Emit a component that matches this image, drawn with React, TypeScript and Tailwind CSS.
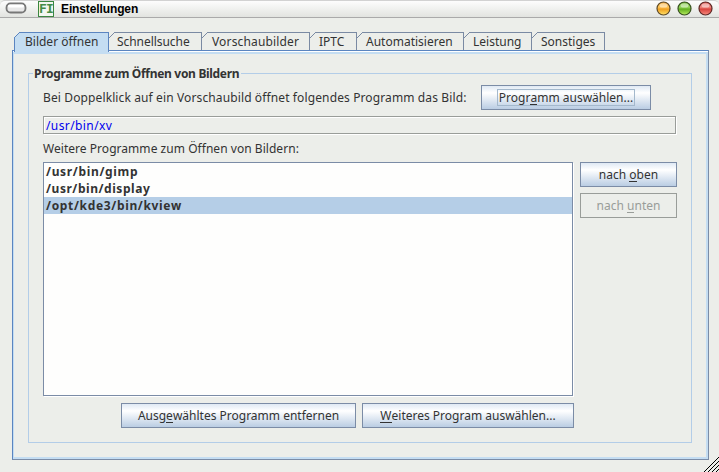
import React from "react";

const tabs = [
  { label: "Schnellsuche", width: "w-[93px]", spacing: "tracking-[-0.05px]", pad: "pl-[8px]" },
  { label: "Vorschaubilder", width: "w-[108px]", spacing: "tracking-[0.15px]", pad: "pl-[10px]" },
  { label: "IPTC", width: "w-[47px]", spacing: "tracking-[0px]", pad: "pl-[9px]" },
  { label: "Automatisieren", width: "w-[107px]", spacing: "tracking-[0px]", pad: "pl-[9px]" },
  { label: "Leistung", width: "w-[68px]", spacing: "tracking-[0px]", pad: "pl-[9px]" },
  { label: "Sonstiges", width: "w-[73px]", spacing: "tracking-[0px]", pad: "pl-[9px]" },
];

function Tab({ label, width, spacing, pad }: { label: string; width: string; spacing: string; pad: string }) {
  return (
    <div className={`relative h-[18px] shrink-0 border-t border-r border-[#7a8aa3] leading-[18px] ${pad} ${width} ${spacing}`}>
      <svg className="absolute -top-px left-0" width="7" height="7" shapeRendering="crispEdges">
        <path d="M0 0h5v1h-1v1h-1v1h-1v1h-1v1h-1z" fill="#eceeea" />
        <path d="M0 5h1v-1h1v-1h1v-1h1v-1h1v-1h1v1h-1v1h-1v1h-1v1h-1v1h-1v1h-1z" fill="#7a8aa3" />
      </svg>
      {label}
    </div>
  );
}

function Button({ className, children }: { className: string; children: React.ReactNode }) {
  return (
    <button
      className={`flex h-[25px] shrink-0 items-center justify-center border border-[#7b8ca6] bg-linear-to-b from-[#dfe9f4] via-[#ffffff] via-30% to-[#bacde3] leading-[17px] ${className}`}
    >
      {children}
    </button>
  );
}

function Key({ children }: { children: string }) {
  return <span className="inline-block h-[14px] border-b border-current leading-[14px]">{children}</span>;
}

function Light({ id, light, mid, dark, rim }: { id: string; light: string; mid: string; dark: string; rim: string }) {
  return (
    <svg width="15" height="15" viewBox="0 0 15 15">
      <defs>
        <linearGradient id={id} x1="0" y1="0" x2="0" y2="1">
          <stop offset="0" stopColor={dark} />
          <stop offset="0.4" stopColor={mid} />
          <stop offset="0.55" stopColor={dark} />
          <stop offset="1" stopColor={light} />
        </linearGradient>
      </defs>
      <circle cx="7.5" cy="7.5" r="6.5" fill={`url(#${id})`} stroke={rim} strokeWidth="1.2" />
      <ellipse cx="7.5" cy="4.4" rx="4" ry="2.2" fill="#fff" opacity="0.5" />
    </svg>
  );
}

export default function App() {
  return (
    <div className="relative h-[472px] w-[719px] overflow-hidden bg-[#eceeea] font-['Noto_Sans','Open_Sans',sans-serif] text-[12px] text-[#333]">
      <header className="flex h-[18px] items-start rounded-t-[5px] border-t border-b border-t-[#d2d2d2] border-b-[#aaa] bg-linear-to-b from-[#fdfdfd] to-[#e2e4e0]">
        <svg className="mt-px ml-[5px]" width="22" height="12">
          <rect x="1.5" y="1.5" width="19" height="9" rx="4" fill="#e8e8e8" stroke="#777" strokeWidth="1.8" />
          <rect x="3" y="2.5" width="16" height="3" rx="1.5" fill="#fff" />
        </svg>
        <div className="ml-[11px] h-4 w-4 border border-[#3c8741] bg-[#f3f7f0] text-center font-['DejaVu_Sans_Mono',monospace] text-[13px] leading-[13px] font-bold tracking-[-0.8px] text-[#438c47]">
          FI
        </div>
        <div className="ml-[7px] font-['Liberation_Sans',Arial,sans-serif] text-[12px] leading-[16px] font-bold tracking-[-0.12px] text-black">
          Einstellungen
        </div>
        <div className="mr-[6px] ml-auto flex gap-[6px]">
          <Light id="orange" light="#ffe36b" mid="#ffc557" dark="#f0a020" rim="#5e4a28" />
          <Light id="green" light="#b8ed62" mid="#95d65c" dark="#62b020" rim="#37501f" />
          <Light id="red" light="#f88d80" mid="#ee8780" dark="#d8443f" rim="#5e2826" />
        </div>
      </header>

      <nav className="mt-[14px] ml-[14px] flex h-[18px]">
        <div className="relative z-10 h-[20px] w-[95px] shrink-0 border-t border-r border-l border-[#5b85c0] bg-[#c4ddf2] pl-[10px] leading-[18px] tracking-[0px]">
          <svg className="absolute -top-px -left-px" width="7" height="7" shapeRendering="crispEdges">
            <path d="M0 0h6v1h-1v1h-1v1h-1v1h-1v1h-1v1h-1z" fill="#eceeea" />
            <path d="M0 5h1v-1h1v-1h1v-1h1v-1h1v-1h1v1h-1v1h-1v1h-1v1h-1v1h-1v1h-1z" fill="#5b85c0" />
          </svg>
          Bilder öffnen
        </div>
        {tabs.map((tab) => (
          <Tab key={tab.label} {...tab} />
        ))}
      </nav>

      <main className="ml-3 h-[410px] w-[697px] border border-t-[#5b85c0] border-r-[#7b8ca6] border-b-[#7b8ca6] border-l-[#5b85c0]">
        <div className="h-full border-t border-t-white">
          <div className="h-full border-t-2 border-r-2 border-b-2 border-l border-[#c4ddf2]">
            <section className="relative mt-[19px] ml-[14px] h-[370px] w-[664px] border border-[#b3cde8] pl-[14px]">
              <h2 className="absolute -top-[9px] left-1 bg-[#eceeea] pr-[2px] pl-[1px] leading-[17px] font-bold tracking-[-0.31px] whitespace-nowrap">
                Programme zum Öffnen von Bildern
              </h2>
              <div className="flex pt-[11px]">
                <div className="w-[438px] shrink-0 leading-[25px] tracking-[0.12px] whitespace-nowrap">
                  Bei Doppelklick auf ein Vorschaubild öffnet folgendes Programm das Bild:
                </div>
                <Button className="w-[170px]">
                  <span className="flex h-[17px] w-[138px] items-center justify-center border border-[#a3b8cc] whitespace-pre">
                    <span>Progr<Key>a</Key>mm auswählen...</span>
                  </span>
                </Button>
              </div>
              <div className="mt-[6px] h-[18px] w-[633px] border border-[#999d99] pl-[2px] leading-[17px] tracking-[0.4px] text-[#0000ee] shadow-[1px_1px_0_#fff,inset_1px_1px_0_#fff]">
                /usr/bin/xv
              </div>
              <div className="mt-[6px] h-[22px] leading-[18px] tracking-[0.04px]">Weitere Programme zum Öffnen von Bildern:</div>
              <div className="flex gap-[7px]">
                <ul className="h-[234px] w-[530px] border border-[#7b8ca6] bg-[#fefefd] leading-[17px] font-bold tracking-[0.66px] shadow-[1px_1px_0_#fff]">
                  <li className="h-[17px] pl-[2px]">/usr/bin/gimp</li>
                  <li className="h-[17px] pl-[2px] tracking-[0.55px]">/usr/bin/display</li>
                  <li className="h-[17px] bg-[#b5cee7] pl-[2px]">/opt/kde3/bin/kview</li>
                </ul>
                <div className="flex flex-col gap-[6px]">
                  <Button className="w-[97px]">
                    <span>nach <Key>o</Key>ben</span>
                  </Button>
                  <button disabled className="flex h-[25px] w-[97px] items-center justify-center border border-[#999d99] text-[#999d99]">
                    <span>nach <Key>u</Key>nten</span>
                  </button>
                </div>
              </div>
              <div className="mt-[7px] flex gap-[6px] pl-[78px]">
                <Button className="w-[235px]">
                  <span>Ausg<Key>e</Key>wähltes Programm entfernen</span>
                </Button>
                <Button className="w-[212px]">
                  <span><Key>W</Key>eiteres Program auswählen...</span>
                </Button>
              </div>
            </section>
          </div>
        </div>
      </main>

      <svg className="absolute right-0 bottom-0" width="15" height="15" shapeRendering="crispEdges">
        <path d="M0 15L15 0M4 15L15 4M8 15L15 8M12 15L15 12" stroke="#000" />
      </svg>
    </div>
  );
}
